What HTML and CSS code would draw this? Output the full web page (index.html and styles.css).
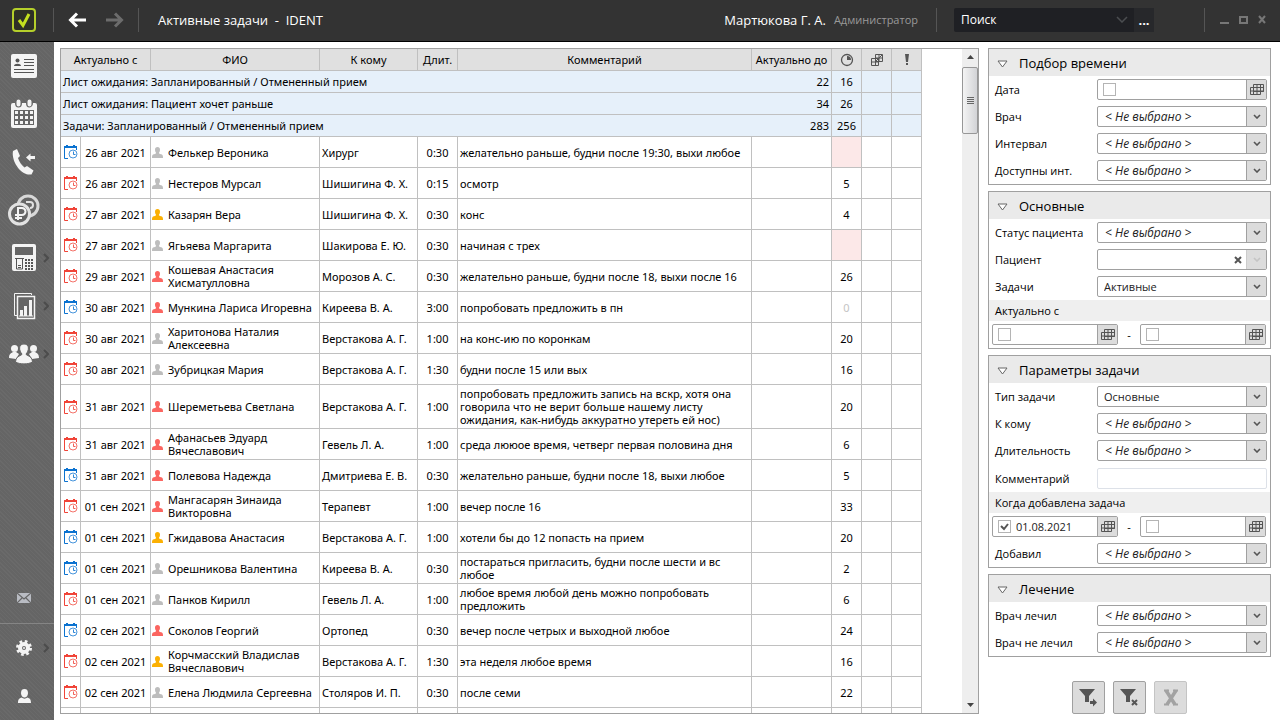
FILE: index.html
```
<!DOCTYPE html>
<html lang="ru">
<head>
<meta charset="utf-8">
<title>Активные задачи - IDENT</title>
<link rel="stylesheet" href="styles.css">
</head>
<body>
<svg class="sprite" aria-hidden="true">
  <symbol id="task" viewBox="0 0 14 14"><path d="M.5 2v11.500H4" fill="none" stroke="currentColor"/><path d="M0 1h13v2H0zM2 0h2v2H2zM9 0h2v2H9zM12 3h1v2h-1z" fill="currentColor"/><circle cx="9" cy="9" r="4" fill="#fff" stroke="currentColor" stroke-opacity=".75"/><path d="M9.500 6.500v3h2" fill="none" stroke="currentColor" stroke-opacity=".85"/></symbol>
  <symbol id="man" viewBox="0 0 11 11"><path d="M5.500 0C7.200 0 8 1 8 2.700S7.300 5 7 5.800c0 .7.6 1.200 2 1.400 1.600.3 2 1 2 3.800H0C0 8.200.4 7.500 2 7.200c1.400-.2 2-.7 2-1.400C3.700 5 3 4.400 3 2.700S3.800 0 5.500 0z" fill="currentColor"/></symbol>
  <symbol id="cal" viewBox="0 0 14 11"><path d="M3.500.5h10v7h-10zM.5 3.500h13M.5 3.500v7h10v-10M.5 7h13M3.500 7v3.500M7 .5v10M13.500 7.500h-3" fill="none" stroke="#555"/></symbol>
  <symbol id="down" viewBox="0 0 8 5"><path d="M1 1l3 3 3-3" fill="none" stroke="currentColor" stroke-width="1.600"/></symbol>
  <symbol id="tri" viewBox="0 0 11 8"><path d="M1 1h9L5.500 7z" fill="#fff" stroke="#666"/></symbol>
  <symbol id="more" viewBox="0 0 6 10"><path d="M1 1l4 4-4 4" fill="none" stroke="#4c4c4c" stroke-width="2"/></symbol>
</svg>

<header class="topbar">
  <svg class="logo" viewBox="0 0 24 24"><rect x="1" y="1" width="22" height="22" rx="3" fill="#2e3026" stroke="#b5cf2b" stroke-width="2"/><path d="M7 12l4 5.500L17 6" fill="none" stroke="#c4e01f" stroke-width="3"/></svg>
  <span class="rule"></span>
  <button class="nav" aria-label="Назад"><svg width="19" height="16" viewBox="0 0 19 16"><path d="M18 8H3M9 1.500L2.500 8 9 14.500" fill="none" stroke="#fff" stroke-width="3"/></svg></button>
  <button class="nav" aria-label="Вперёд"><svg width="19" height="16" viewBox="0 0 19 16"><path d="M1 8h15M10 1.500L16.500 8 10 14.500" fill="none" stroke="#6c6c6c" stroke-width="3"/></svg></button>
  <span class="rule"></span>
  <h1 class="title">Активные задачи&nbsp; - &nbsp;IDENT</h1>
  <span class="user">Мартюкова Г. А.</span>
  <span class="role">Администратор</span>
  <span class="rule"></span>
  <div class="search">
    <input type="text" value="Поиск" aria-label="Поиск">
    <svg width="12" height="7" viewBox="0 0 12 7"><path d="M1 1l5 5 5-5" fill="none" stroke="#4b4d50" stroke-width="1.500"/></svg>
    <button aria-label="Ещё">...</button>
  </div>
  <span class="rule"></span>
  <div class="window">
    <button aria-label="Свернуть"><svg width="10" height="10"><path d="M1 8h9" stroke="#777" stroke-width="2"/></svg></button>
    <button aria-label="Развернуть"><svg width="10" height="10"><path d="M2 2h7v6H2z" fill="none" stroke="#777" stroke-width="2"/></svg></button>
    <button aria-label="Закрыть"><svg width="10" height="10"><path d="M2 1l6 7M8 1L2 8" stroke="#777" stroke-width="2"/></svg></button>
  </div>
</header>

<div class="body">
  <nav class="side">
    <button aria-label="Карточки"><svg width="26" height="25"><rect width="26" height="24" rx="2" fill="#f4f4f4"/><path d="M13 5.500h10M13 8.500h10M13 11.500h10M3 15.500h20M3 18.500h20" stroke="#555"/><circle cx="6.500" cy="6.500" r="2" fill="#555"/><path d="M3 12c0-3 7-3 7 0z" fill="#555"/></svg></button>
    <button aria-label="Календарь"><svg width="26" height="30"><rect y="4" width="26" height="25" rx="2" fill="#f4f4f4"/><path d="M5 4a2.500 3.500 0 005 0M16 4a2.500 3.500 0 005 0" fill="#666" stroke="#666" stroke-width="2"/><path d="M7.500 2.500v3M18.500 2.500v3" stroke="#f4f4f4" stroke-width="4" stroke-linecap="round"/><path d="M3 11h20v15H3z" fill="#666"/><path d="M4 13.500h18M4 18.500h18M4 23.500h18" stroke="#f4f4f4" stroke-width="3" stroke-dasharray="3 2"/></svg></button>
    <button aria-label="Звонки"><svg width="24" height="28"><path d="M1 3l4-2 3 7-2 2c1.500 4.500 3.500 7 6.500 9.500l2.500-1.500 6.500 4.500-2 4C9 28-1 13 1 3z" fill="#f4f4f4"/><path d="M14 9.500l4.500-4v2.500H23v3h-4.500v2.500z" fill="#f4f4f4"/></svg></button>
    <button aria-label="Оплата"><svg width="32" height="32"><circle cx="20" cy="12" r="10" fill="#666" stroke="#d8d8d8" stroke-width="3"/><path d="M18 8h4a3 3 0 010 6" fill="none" stroke="#e0e0e0" stroke-width="2"/><circle cx="11.500" cy="20" r="10" fill="#666" stroke="#e2e2e2" stroke-width="3"/><path d="M10 26V14h4a3 3 0 010 7H7M7 24h7" fill="none" stroke="#f4f4f4" stroke-width="2"/></svg></button>
    <button aria-label="Касса"><svg width="24" height="28"><rect width="24" height="27" rx="2" fill="#f4f4f4"/><path d="M3 3h18v8H3z" fill="#666"/><path d="M3 14.500h9M4.500 15v10h6V15" fill="none" stroke="#555"/><path d="M6 21.500h3M6 23.500h3" stroke="#555"/><path d="M13 16h8M13 19h8M13 22h8M13 25h8" stroke="#555" stroke-width="2" stroke-dasharray="2 1"/></svg><svg class="more"><use href="#more"/></svg></button>
    <button aria-label="Отчёты"><svg width="23" height="28"><path d="M4 23.500H1.500v-22h17V3" fill="none" stroke="#f4f4f4"/><path d="M4.500 4.500h17v22h-17z" fill="#666" stroke="#f4f4f4" stroke-width="1.500"/><path d="M8.500 24v-6M12.500 24V14M17.500 24V8" stroke="#f4f4f4" stroke-width="3"/><path d="M6 24h14" stroke="#f4f4f4"/></svg><svg class="more"><use href="#more"/></svg></button>
    <button aria-label="Пациенты"><svg width="30" height="20" fill="#f4f4f4"><circle cx="5.500" cy="4.500" r="3.500"/><path d="M0 14c0-5 3-5 4-6h3l3 2-3 5z"/><circle cx="24.500" cy="4.500" r="3.500"/><path d="M30 14c0-5-3-5-4-6h-3l-3 2 3 5z"/><path d="M15 0c6 0 5 7 2 10 0 2 6 1 6.500 8-4 2.500-13 2.500-17 0C7 11 13 12 13 10 10 7 9 0 15 0z" stroke="#666"/></svg><svg class="more"><use href="#more"/></svg></button>
    <button class="mail" aria-label="Почта"><svg width="14" height="10"><rect width="14" height="10" fill="#b9bcc3"/><path d="M0 0l7 6 7-6M0 10l5-5M14 10L9 5" fill="none" stroke="#666" stroke-width="1.200"/></svg></button>
    <hr>
    <button aria-label="Настройки"><svg width="16" height="16"><circle cx="8" cy="8" r="6.500" fill="none" stroke="#f4f4f4" stroke-width="3" stroke-dasharray="2.600 2.500"/><circle cx="8" cy="8" r="4" fill="none" stroke="#f4f4f4" stroke-width="4"/><circle cx="8" cy="8" r="1" fill="#f4f4f4"/></svg><svg class="more"><use href="#more"/></svg></button>
    <button class="me" aria-label="Профиль"><svg width="13" height="15" viewBox="0 0 13 15"><path d="M6.500 0C9 0 10 1.500 10 4.200S8 8.500 6.500 8.500 3 6.900 3 4.200 4 0 6.500 0zM3.500 8.500c2 1.500 4 1.500 6 0C12 9.500 13 10.500 13 14H0c0-3.500 1-4.500 3.500-5.500z" fill="currentColor"/></svg></button>
  </nav>

  <main class="main">
    <section class="list">
      <div class="view">
      <table>
        <colgroup><col class="c-ico"><col class="c-date"><col class="c-name"><col class="c-who"><col class="c-len"><col><col class="c-till"><col class="c-n"><col class="c-n"><col class="c-n"></colgroup>
        <thead><tr><th colspan="2">Актуально с</th><th>ФИО</th><th>К кому</th><th>Длит.</th><th>Комментарий</th><th>Актуально до</th>
          <th><svg width="14" height="14"><circle cx="7" cy="7" r="5.500" fill="none" stroke="#555" stroke-width="1.300"/><path d="M7 3v4h4A4 4 0 007 3z" fill="#555"/></svg></th>
          <th><svg width="14" height="14"><path d="M5.500 1.500h7v7h-7zM1.500 5.500h7v7h-7zM9 1.500v7M5.500 5v7.500M1.500 9h7M5.500 5h7M6 8l6-6" fill="none" stroke="#555"/></svg></th>
          <th><svg width="6" height="12"><path d="M1 0h4L4 8H2zM2 9h2v2H2z" fill="#555"/></svg></th></tr></thead>
        <tbody>
        <tr class="group"><td colspan="6">Лист ожидания: Запланированный / Отмененный прием</td><td>22</td><td>16</td><td></td><td></td></tr>
        <tr class="group"><td colspan="6">Лист ожидания: Пациент хочет раньше</td><td>34</td><td>26</td><td></td><td></td></tr>
        <tr class="group"><td colspan="6">Задачи: Запланированный / Отмененный прием</td><td>283</td><td>256</td><td></td><td></td></tr>
        <tr><td><svg class="task blue"><use href="#task"/></svg></td><td>26 авг 2021</td><td><div class="name"><svg class="man"><use href="#man"/></svg>Фелькер Вероника</div></td><td>Хирург</td><td>0:30</td><td>желательно раньше, будни после 19:30, выхи любое</td><td></td><td class="pink"></td><td></td><td></td></tr>
        <tr><td><svg class="task"><use href="#task"/></svg></td><td>26 авг 2021</td><td><div class="name"><svg class="man"><use href="#man"/></svg>Нестеров Мурсал</div></td><td>Шишигина Ф. Х.</td><td>0:15</td><td>осмотр</td><td></td><td>5</td><td></td><td></td></tr>
        <tr><td><svg class="task"><use href="#task"/></svg></td><td>27 авг 2021</td><td><div class="name"><svg class="man gold"><use href="#man"/></svg>Казарян Вера</div></td><td>Шишигина Ф. Х.</td><td>0:30</td><td>конс</td><td></td><td>4</td><td></td><td></td></tr>
        <tr><td><svg class="task"><use href="#task"/></svg></td><td>27 авг 2021</td><td><div class="name"><svg class="man"><use href="#man"/></svg>Ягьяева Маргарита</div></td><td>Шакирова Е. Ю.</td><td>0:30</td><td>начиная с трех</td><td></td><td class="pink"></td><td></td><td></td></tr>
        <tr><td><svg class="task"><use href="#task"/></svg></td><td>29 авг 2021</td><td><div class="name"><svg class="man red"><use href="#man"/></svg>Кошевая Анастасия Хисматулловна</div></td><td>Морозов А. С.</td><td>0:30</td><td>желательно раньше, будни после 18, выхи после 16</td><td></td><td>26</td><td></td><td></td></tr>
        <tr><td><svg class="task blue"><use href="#task"/></svg></td><td>30 авг 2021</td><td><div class="name"><svg class="man red"><use href="#man"/></svg>Мункина Лариса Игоревна</div></td><td>Киреева В. А.</td><td>3:00</td><td>попробовать предложить в пн</td><td></td><td class="zero">0</td><td></td><td></td></tr>
        <tr><td><svg class="task"><use href="#task"/></svg></td><td>30 авг 2021</td><td><div class="name"><svg class="man"><use href="#man"/></svg>Харитонова Наталия Алексеевна</div></td><td>Верстакова А. Г.</td><td>1:00</td><td>на конс-ию по коронкам</td><td></td><td>20</td><td></td><td></td></tr>
        <tr><td><svg class="task"><use href="#task"/></svg></td><td>30 авг 2021</td><td><div class="name"><svg class="man"><use href="#man"/></svg>Зубрицкая Мария</div></td><td>Верстакова А. Г.</td><td>1:30</td><td>будни после 15 или вых</td><td></td><td>16</td><td></td><td></td></tr>
        <tr><td><svg class="task"><use href="#task"/></svg></td><td>31 авг 2021</td><td><div class="name"><svg class="man red"><use href="#man"/></svg>Шереметьева Светлана</div></td><td>Верстакова А. Г.</td><td>1:00</td><td>попробовать предложить запись на вскр, хотя она говорила что не верит больше нашему листу ожидания, как-нибудь аккуратно утереть ей нос)</td><td></td><td>20</td><td></td><td></td></tr>
        <tr><td><svg class="task"><use href="#task"/></svg></td><td>31 авг 2021</td><td><div class="name"><svg class="man red"><use href="#man"/></svg>Афанасьев Эдуард Вячеславович</div></td><td>Гевель Л. А.</td><td>1:00</td><td>среда лююое время, четверг первая половина дня</td><td></td><td>6</td><td></td><td></td></tr>
        <tr><td><svg class="task blue"><use href="#task"/></svg></td><td>31 авг 2021</td><td><div class="name"><svg class="man red"><use href="#man"/></svg>Полевова Надежда</div></td><td>Дмитриева Е. В.</td><td>0:30</td><td>желательно раньше, будни после 18, выхи любое</td><td></td><td>5</td><td></td><td></td></tr>
        <tr><td><svg class="task"><use href="#task"/></svg></td><td>01 сен 2021</td><td><div class="name"><svg class="man red"><use href="#man"/></svg>Мангасарян Зинаида Викторовна</div></td><td>Терапевт</td><td>1:00</td><td>вечер после 16</td><td></td><td>33</td><td></td><td></td></tr>
        <tr><td><svg class="task blue"><use href="#task"/></svg></td><td>01 сен 2021</td><td><div class="name"><svg class="man gold"><use href="#man"/></svg>Гжидавова Анастасия</div></td><td>Верстакова А. Г.</td><td>1:00</td><td>хотели бы до 12 попасть на прием</td><td></td><td>20</td><td></td><td></td></tr>
        <tr><td><svg class="task blue"><use href="#task"/></svg></td><td>01 сен 2021</td><td><div class="name"><svg class="man"><use href="#man"/></svg>Орешникова Валентина</div></td><td>Киреева В. А.</td><td>0:30</td><td>постараться пригласить, будни после шести и вс любое</td><td></td><td>2</td><td></td><td></td></tr>
        <tr><td><svg class="task"><use href="#task"/></svg></td><td>01 сен 2021</td><td><div class="name"><svg class="man"><use href="#man"/></svg>Панков Кирилл</div></td><td>Гевель Л. А.</td><td>1:00</td><td>любое время любой день можно попробовать предложить</td><td></td><td>6</td><td></td><td></td></tr>
        <tr><td><svg class="task blue"><use href="#task"/></svg></td><td>02 сен 2021</td><td><div class="name"><svg class="man red"><use href="#man"/></svg>Соколов Георгий</div></td><td>Ортопед</td><td>0:30</td><td>вечер после четрых и выходной любое</td><td></td><td>24</td><td></td><td></td></tr>
        <tr><td><svg class="task"><use href="#task"/></svg></td><td>02 сен 2021</td><td><div class="name"><svg class="man gold"><use href="#man"/></svg>Корчмасский Владислав Вячеславович</div></td><td>Верстакова А. Г.</td><td>1:30</td><td>эта неделя любое время</td><td></td><td>16</td><td></td><td></td></tr>
        <tr><td><svg class="task"><use href="#task"/></svg></td><td>02 сен 2021</td><td><div class="name"><svg class="man"><use href="#man"/></svg>Елена Людмила Сергеевна</div></td><td>Столяров И. П.</td><td>0:30</td><td>после семи</td><td></td><td>22</td><td></td><td></td></tr>
        <tr><td></td><td></td><td></td><td></td><td></td><td></td><td></td><td></td><td></td><td></td></tr>
        </tbody>
      </table>
      </div>
      <div class="scroll">
        <svg width="16" height="18"><path d="M5 10l3.500-4L12 10z" fill="#444"/></svg>
        <div class="thumb"><i></i><i></i><i></i><i></i></div>
        <svg width="16" height="18"><path d="M5 8h7l-3.500 4z" fill="#444"/></svg>
      </div>
    </section>

    <aside class="filters">
      <section class="panel">
        <h2><svg class="tri"><use href="#tri"/></svg>Подбор времени</h2>
        <div class="row"><label for="f1">Дата</label><div class="field"><input type="checkbox" aria-label="Дата задана"><input type="text" id="f1"><button aria-label="Календарь"><svg class="cal"><use href="#cal"/></svg></button></div></div>
        <div class="row"><label for="f2">Врач</label><div class="field"><select id="f2" class="none"><option>&lt; Не выбрано &gt;</option></select><span class="arrow"><svg><use href="#down"/></svg></span></div></div>
        <div class="row"><label for="f3">Интервал</label><div class="field"><select id="f3" class="none"><option>&lt; Не выбрано &gt;</option></select><span class="arrow"><svg><use href="#down"/></svg></span></div></div>
        <div class="row"><label for="f4">Доступны инт.</label><div class="field"><select id="f4" class="none"><option>&lt; Не выбрано &gt;</option></select><span class="arrow"><svg><use href="#down"/></svg></span></div></div>
      </section>
      <section class="panel">
        <h2><svg class="tri"><use href="#tri"/></svg>Основные</h2>
        <div class="row"><label for="f5">Статус пациента</label><div class="field"><select id="f5" class="none"><option>&lt; Не выбрано &gt;</option></select><span class="arrow"><svg><use href="#down"/></svg></span></div></div>
        <div class="row"><label for="f6">Пациент</label><div class="field"><input type="text" id="f6"><button class="clear" aria-label="Очистить"><svg width="8" height="8"><path d="M1 1l6 6M7 1L1 7" stroke="#555" stroke-width="2"/></svg></button><span class="arrow off"><svg><use href="#down"/></svg></span></div></div>
        <div class="row"><label for="f7">Задачи</label><div class="field"><select id="f7"><option>Активные</option></select><span class="arrow"><svg><use href="#down"/></svg></span></div></div>
        <h3>Актуально с</h3>
        <div class="range"><div class="field"><input type="checkbox" aria-label="Начало задано"><input type="text" aria-label="Актуально с"><button aria-label="Календарь"><svg class="cal"><use href="#cal"/></svg></button></div><span>-</span><div class="field"><input type="checkbox" aria-label="Конец задан"><input type="text" aria-label="Актуально по"><button aria-label="Календарь"><svg class="cal"><use href="#cal"/></svg></button></div></div>
      </section>
      <section class="panel">
        <h2><svg class="tri"><use href="#tri"/></svg>Параметры задачи</h2>
        <div class="row"><label for="f8">Тип задачи</label><div class="field"><select id="f8"><option>Основные</option></select><span class="arrow"><svg><use href="#down"/></svg></span></div></div>
        <div class="row"><label for="f9">К кому</label><div class="field"><select id="f9" class="none"><option>&lt; Не выбрано &gt;</option></select><span class="arrow"><svg><use href="#down"/></svg></span></div></div>
        <div class="row"><label for="f10">Длительность</label><div class="field"><select id="f10" class="none"><option>&lt; Не выбрано &gt;</option></select><span class="arrow"><svg><use href="#down"/></svg></span></div></div>
        <div class="row tall"><label for="f11">Комментарий</label><div class="field plain"><input type="text" id="f11"></div></div>
        <h3>Когда добавлена задача</h3>
        <div class="range"><div class="field"><input type="checkbox" checked aria-label="Начало задано"><input type="text" value="01.08.2021" aria-label="Добавлена с"><button aria-label="Календарь"><svg class="cal"><use href="#cal"/></svg></button></div><span>-</span><div class="field"><input type="checkbox" aria-label="Конец задан"><input type="text" aria-label="Добавлена по"><button aria-label="Календарь"><svg class="cal"><use href="#cal"/></svg></button></div></div>
        <div class="row"><label for="f12">Добавил</label><div class="field"><select id="f12" class="none"><option>&lt; Не выбрано &gt;</option></select><span class="arrow"><svg><use href="#down"/></svg></span></div></div>
      </section>
      <section class="panel">
        <h2><svg class="tri"><use href="#tri"/></svg>Лечение</h2>
        <div class="row"><label for="f13">Врач лечил</label><div class="field"><select id="f13" class="none"><option>&lt; Не выбрано &gt;</option></select><span class="arrow"><svg><use href="#down"/></svg></span></div></div>
        <div class="row"><label for="f14">Врач не лечил</label><div class="field"><select id="f14" class="none"><option>&lt; Не выбрано &gt;</option></select><span class="arrow"><svg><use href="#down"/></svg></span></div></div>
      </section>
      <div class="actions">
        <button aria-label="Применить фильтр"><svg width="19" height="19"><path d="M0 1h16L10 8v6H6V8z" fill="#555"/><path d="M11 13h3v-2.500l4 4-4 4V16h-3z" fill="#555"/></svg></button>
        <button aria-label="Сбросить фильтр"><svg width="19" height="19"><path d="M0 1h16L10 8v6H6V8z" fill="#555"/><path d="M12 12l5 5M17 12l-5 5" stroke="#555" stroke-width="2"/></svg></button>
        <button disabled aria-label="Экспорт в Excel"><svg width="16" height="18"><path d="M3 1.500l9 14M13 1.500L4 15.500" stroke="#a2a2a2" stroke-width="3.500"/><path d="M1 1.500h5M10 1.500h5M1 15.500h5M10 15.500h5" stroke="#a2a2a2" stroke-width="2"/></svg></button>
      </div>
    </aside>
  </main>
</div>
</body>
</html>
```
FILE: styles.css
```
* { box-sizing: border-box; }
body {
  margin: 0;
  height: 100vh;
  display: flex;
  flex-direction: column;
  overflow: hidden;
  background: #fff;
  color: #000;
  font: 11px/13px "Noto Sans", sans-serif;
}
svg { display: block; flex: none; }
button, input, select { font: inherit; color: inherit; margin: 0; padding: 0; border: 0; background: none; }
.sprite { width: 0; height: 0; position: absolute; }

/* Top bar */
.topbar {
  flex: none;
  height: 42px;
  display: flex;
  align-items: center;
  padding: 0 13px 2px 12px;
  background: #333;
  border-bottom: 1px solid #000;
  color: #fff;
  font: 13px/20px "Open Sans", sans-serif;
}
.logo { width: 24px; height: 24px; margin-right: 17px; }
.rule { width: 1px; height: 24px; background: #555; }
.nav { width: 37px; display: flex; justify-content: center; }
.nav:nth-of-type(1) { margin-left: 5px; }
.nav + .rule { margin-left: 5px; }
.title { flex: 1; margin: 0 0 0 19px; font-size: 13px; font-weight: 400; }
.role { margin: 0 18px 0 8px; color: #999; font-size: 11px; }
.search {
  width: 200px;
  height: 24px;
  margin: 0 50px 0 17px;
  display: flex;
  align-items: center;
  background: #1f2024;
  border-radius: 2px;
}
.search input { flex: 1; min-width: 0; padding-left: 7px; font-size: 12px; }
.search button { width: 20px; height: 24px; margin-left: 6px; background: #27282b; font-weight: 700; line-height: 18px; }
.window { display: flex; gap: 9px; margin-left: 14px; }

.body { flex: 1; min-height: 0; display: flex; }

/* Left navigation */
.side {
  flex: none;
  width: 54px;
  display: flex;
  flex-direction: column;
  background: repeating-linear-gradient(45deg, #6a6a6a 0 1px, #656565 1px 3px);
}
.side button { position: relative; flex: none; width: 48px; height: 48px; display: flex; align-items: center; justify-content: center; }
.side .more { position: absolute; left: 43px; top: 19px; width: 6px; height: 10px; }
.side .mail { margin-top: auto; }
.side hr { width: 100%; height: 1px; margin: 1px 0 0; border: 0; background: #858585; }
.side .me { color: #f4f4f4; }

.main { flex: 1; min-width: 0; display: flex; gap: 9px; padding: 6px 9px 6px 6px; }

/* Task list */
.list { flex: 1; min-width: 0; display: flex; border: 1px solid #a0a0a0; }
.view { flex: 1; min-width: 0; overflow: hidden; padding-right: 40px; }
table { width: 100%; table-layout: fixed; border-spacing: 0; }
.c-ico { width: 20px; }
.c-date { width: 70px; }
.c-name { width: 169px; }
.c-who { width: 98px; }
.c-len { width: 40px; }
.c-till { width: 80px; }
.c-n { width: 30px; }
th { height: 22px; padding: 0; background: #e0e0e0; border: solid #c0c0c0; border-width: 0 1px 1px 0; font-weight: 400; }
th svg { margin: 0 auto; }
td { height: 31px; padding: 2px; border: solid #c0c0c0; border-width: 0 1px 1px 0; }
td:nth-child(2), td:nth-child(5) { padding: 0; text-align: center; }
td:nth-child(8) { text-align: center; }
.group td { height: 22px; background: #e6f0fa; text-align: center; }
.group td:first-child { border-right: 0; text-align: left; }
.group td:nth-child(2) { text-align: right; padding: 0 2px; }
.group td:nth-child(3) { padding: 0; }
.pink { background: #fce8e8; }
.zero { color: #c4c4c4; }
.task { width: 14px; height: 14px; margin: 0 auto; color: #f04438; }
.task.blue { color: #0b72d0; }
.name { display: flex; align-items: center; gap: 5px; margin-left: -1px; }
.man { width: 11px; height: 11px; color: #bdbdbd; }
.man.gold { color: #fbb003; }
.man.red { color: #fb6560; }

.scroll { flex: none; width: 16px; display: flex; flex-direction: column; background: #eee; }
.scroll svg:last-child { margin-top: auto; }
.thumb {
  height: 67px;
  display: flex;
  flex-direction: column;
  align-items: center;
  justify-content: center;
  gap: 1px;
  border: 1px solid #979797;
  border-radius: 2px;
  background: linear-gradient(90deg, #f4f4f4, #d2d3d6);
}
.thumb i { width: 7px; height: 1px; background: #666; }

/* Filters */
.filters { flex: none; width: 283px; display: flex; flex-direction: column; gap: 6px; font-family: "Open Sans", sans-serif; }
.panel { border: 1px solid #a0a0a0; }
h2 { display: flex; align-items: center; gap: 11px; height: 27px; margin: 0; padding: 2px 8px 0; background: #eaeaea; font-size: 13px; font-weight: 400; }
h3 { height: 21px; margin: 0; padding: 0 6px; background: #efefef; font-size: 11px; font-weight: 400; line-height: 21px; }
.tri { width: 11px; height: 8px; }
.row { display: flex; align-items: center; height: 27px; padding: 0 3px 0 6px; }
.row.tall { height: 28px; }
.row label { width: 102px; }
.field { flex: 1; min-width: 0; display: flex; align-items: center; height: 21px; border: 1px solid #a0a0a0; border-radius: 2px; background: #fff; }
.field.plain { border-color: #dde1e8; }
.field input[type="text"], .field select { flex: 1; min-width: 0; width: 0; height: 19px; padding-left: 6px; color: #222; }
.field input[type="text"] { padding-left: 5px; }
.field select { appearance: none; }
.field .none { padding-left: 7px; font-size: 12px; font-style: italic; }
.field input[type="checkbox"] { appearance: none; flex: none; width: 13px; height: 13px; margin-left: 5px; border: 1px solid #b4b4b4; }
.field input[type="checkbox"]:checked {
  background: url("data:image/svg+xml,%3Csvg xmlns='http://www.w3.org/2000/svg' viewBox='0 0 11 11'%3E%3Cpath d='M2 5l3 3 4-5' fill='none' stroke='%23555' stroke-width='2'/%3E%3C/svg%3E") center / 11px no-repeat;
}
.field button, .arrow { flex: none; width: 20px; height: 19px; display: flex; align-items: center; justify-content: center; background: #dcdcdc; border-left: 1px solid #a0a0a0; color: #555; }
.field .clear { width: 16px; background: none; border: 0; }
.arrow svg { width: 8px; height: 5px; }
.arrow.off { color: #c4c4c4; border-color: #ccc; }
.cal { width: 14px; height: 11px; }
.range { display: flex; align-items: center; height: 27px; padding: 0 4px 0 3px; }
.range span { width: 22px; text-align: center; }
.actions { display: flex; justify-content: center; gap: 8px; margin-top: auto; }
.actions button { width: 33px; height: 33px; display: flex; align-items: center; justify-content: center; background: #dcdcdc; border: 1px solid #a0a0a0; border-radius: 2px; }
.actions button:disabled { border-color: #c4c4c4; }
```
